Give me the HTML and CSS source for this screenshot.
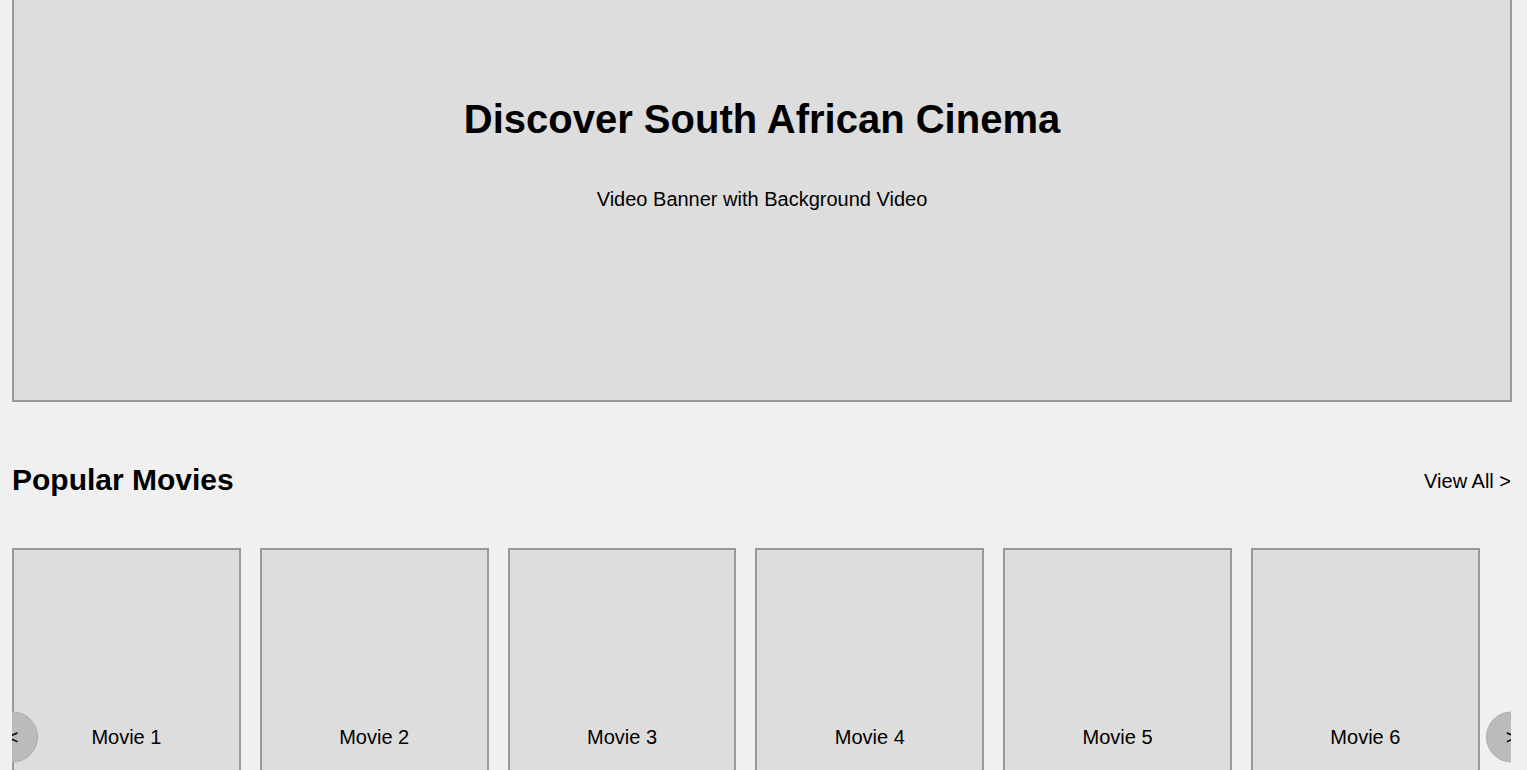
FILE: index.html
```html
<!DOCTYPE html>
<html lang="en">
<head>
<meta charset="utf-8">
<title>South African Cinema</title>
<link rel="stylesheet" href="styles.css">
</head>
<body>
<div class="page">
  <section class="banner">
    <h1 class="banner-title">Discover South African Cinema</h1>
    <p class="banner-sub">Video Banner with Background Video</p>
  </section>

  <section class="movies">
    <div class="section-head">
      <h2 class="section-title">Popular Movies</h2>
      <a class="view-all" href="#">View All &gt;</a>
    </div>
    <div class="carousel">
      <div class="track">
        <div class="card">Movie 1</div>
        <div class="card">Movie 2</div>
        <div class="card">Movie 3</div>
        <div class="card">Movie 4</div>
        <div class="card">Movie 5</div>
        <div class="card">Movie 6</div>
      </div>
      <button class="nav nav-prev">&lt;</button>
      <button class="nav nav-next">&gt;</button>
    </div>
  </section>
</div>
</body>
</html>
```

FILE: styles.css
```css
html, body {
  margin: 0;
  padding: 0;
}

body {
  background: #f0f0f0;
  font-family: "Liberation Sans", Arial, sans-serif;
  color: #000;
}

.page {
  width: 1500px;
  margin-left: 12px;
}

.banner {
  box-sizing: border-box;
  height: 402px;
  background: #dddddd;
  border: 2px solid #999999;
  border-top: none;
  text-align: center;
  padding-top: 96px;
}

.banner-title {
  margin: 0;
  font-size: 40px;
  line-height: 46px;
  font-weight: bold;
}

.banner-sub {
  margin: 46px 0 0;
  font-size: 20px;
  line-height: 23px;
}

.section-head {
  display: flex;
  justify-content: space-between;
  align-items: center;
  margin-top: 60px;
  margin-bottom: 51px;
}

.section-title {
  margin: 0;
  font-size: 30px;
  line-height: 35px;
  font-weight: bold;
}

.view-all {
  font-size: 20px;
  line-height: 23px;
  color: #000;
  text-decoration: none;
  margin-right: 1px;
  margin-top: 4px;
}

.carousel {
  position: relative;
  overflow: hidden;
  width: 1499px;
}

.track {
  display: flex;
  gap: 19px;
}

.card {
  box-sizing: border-box;
  flex: 0 0 228.8px;
  height: 378px;
  background: #dddddd;
  border: 2px solid #999999;
  display: flex;
  align-items: center;
  justify-content: center;
  font-size: 20px;
}

.nav {
  position: absolute;
  top: 50%;
  transform: translateY(-50%);
  width: 51px;
  height: 51px;
  border-radius: 50%;
  background: #bbbbbb;
  border: 1px solid #aaaaaa;
  font-family: "Liberation Sans", Arial, sans-serif;
  font-size: 20px;
  color: #000;
  padding: 0;
  display: flex;
  align-items: center;
  justify-content: center;
}

.nav-prev {
  left: -25px;
}

.nav-next {
  right: -26px;
}
```
